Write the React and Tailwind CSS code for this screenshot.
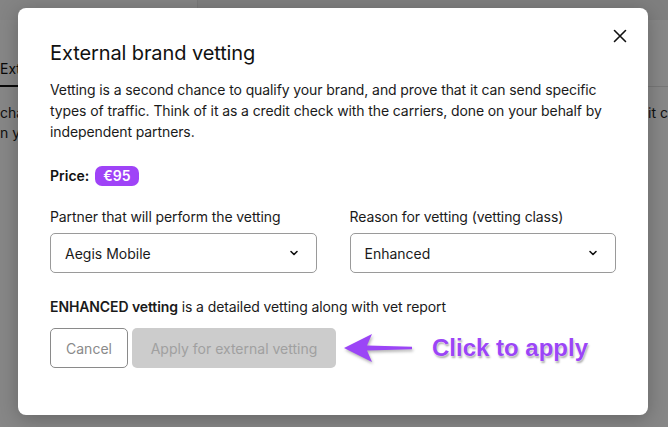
import React from "react";

function Chevron() {
  return (
    <svg width="12" height="12" viewBox="0 0 12 12" fill="none">
      <path d="M3 4.5 L6 7.5 L9 4.5" stroke="#111" strokeWidth="1.6" strokeLinecap="round" strokeLinejoin="round" />
    </svg>
  );
}

function Select({ value }) {
  return (
    <div className="flex h-[40px] items-center justify-between rounded-[5px] border border-[#9a9a9a] bg-white pl-[14px] pr-[16px]">
      <span className="text-[14px] text-[#1a1a1a]">{value}</span>
      <Chevron />
    </div>
  );
}

export default function App() {
  return (
    <div className="relative h-[427px] w-[668px] overflow-hidden bg-white" style={{ fontFamily: "Inter, 'Noto Sans', sans-serif" }}>
      {/* underlying page */}
      <div className="flex h-full flex-col">
        <div className="flex h-[20px]">
          <div className="w-[198px] border-r border-[#e5e5e5] bg-[#fafafa]" />
          <div className="flex-1 bg-[#f0f0f0]" />
        </div>
        <div className="flex h-[67px] items-end border-b border-[#e0e0e0]">
          <div className="mb-[-1px] border-b-2 border-[#111] pb-[6px] pl-0 pr-[40px] text-[14px] text-[#111]">Exte</div>
        </div>
        <div className="flex justify-between pt-[16px] text-[14px] leading-[20px] text-[#222]">
          <div>
            <div>cha</div>
            <div>n yo</div>
          </div>
          <div>it c</div>
        </div>
      </div>

      {/* overlay */}
      <div className="absolute inset-0 bg-black/[0.47]">
        <div className="ml-[18px] mt-[8px] flex h-[407px] w-[630px] flex-col rounded-[8px] bg-white px-[32px] pt-[32px] shadow-[0_4px_20px_rgba(0,0,0,0.25)]">
          <h2 className="text-[20px] leading-[26px] tracking-[-0.1px] text-[#111]">External brand vetting</h2>
          <p className="mt-[13px] text-[14px] leading-[21px] tracking-[-0.1px] text-[#1a1a1a]">
            Vetting is a second chance to qualify your brand, and prove that it can send specific types of traffic. Think of it as a credit check with the carriers, done on your behalf by independent partners.
          </p>
          <div className="mt-[23px] flex items-center gap-[6px]">
            <span className="text-[14px] font-semibold text-[#111]">Price:</span>
            <span className="rounded-[7px] bg-[#9f43f7] px-[8px] text-[14px] font-semibold leading-[20px] text-white">€95</span>
          </div>
          <div className="mt-[21px] grid grid-cols-2 gap-[33px]">
            <div className="flex flex-col gap-[6px]">
              <label className="text-[14px] leading-[20px] tracking-[-0.1px] text-[#1a1a1a]">Partner that will perform the vetting</label>
              <Select value="Aegis Mobile" />
            </div>
            <div className="flex flex-col gap-[6px]">
              <label className="text-[14px] leading-[20px] tracking-[-0.1px] text-[#1a1a1a]">Reason for vetting (vetting class)</label>
              <Select value="Enhanced" />
            </div>
          </div>
          <p className="mt-[24px] text-[14px] leading-[20px] tracking-[-0.1px] text-[#1a1a1a]">
            <span className="font-semibold">ENHANCED vetting</span> is a detailed vetting along with vet report
          </p>
          <div className="mt-[11px] flex items-center gap-[4px]">
            <button className="h-[40px] w-[78px] rounded-[5px] border border-[#8a8a8a] bg-white text-[14px] text-[#8a8a8a]">Cancel</button>
            <button className="h-[40px] w-[204px] rounded-[5px] bg-[#cccccc] text-[14px] text-[#a0a0a0]">Apply for external vetting</button>
            <svg width="72" height="34" viewBox="0 0 72 34" className="ml-[2px]" style={{ filter: "drop-shadow(1px 2px 1.5px rgba(0,0,0,0.3))" }}>
              <path d="M2 17 L30 3 L25 14.5 L70 15.8 L70 18.2 L25 19.5 L30 31 Z" fill="#9b45f6" />
            </svg>
            <span
              className="ml-[14px] text-[24px] font-bold text-[#9b45f6]"
              style={{ fontFamily: "'Liberation Sans', Arial, sans-serif", textShadow: "0 0 1px #fff, 0 0 2px #fff, 1px 2px 2px rgba(0,0,0,0.35)" }}
            >
              Click to apply
            </span>
          </div>
        </div>
      </div>

      {/* close */}
      <button className="absolute left-[613px] top-[29px] flex h-[14px] w-[14px] items-center justify-center">
        <svg width="14" height="14" viewBox="0 0 14 14">
          <path d="M1.5 1.5 L12.5 12.5 M12.5 1.5 L1.5 12.5" stroke="#111" strokeWidth="1.6" strokeLinecap="round" />
        </svg>
      </button>
    </div>
  );
}
